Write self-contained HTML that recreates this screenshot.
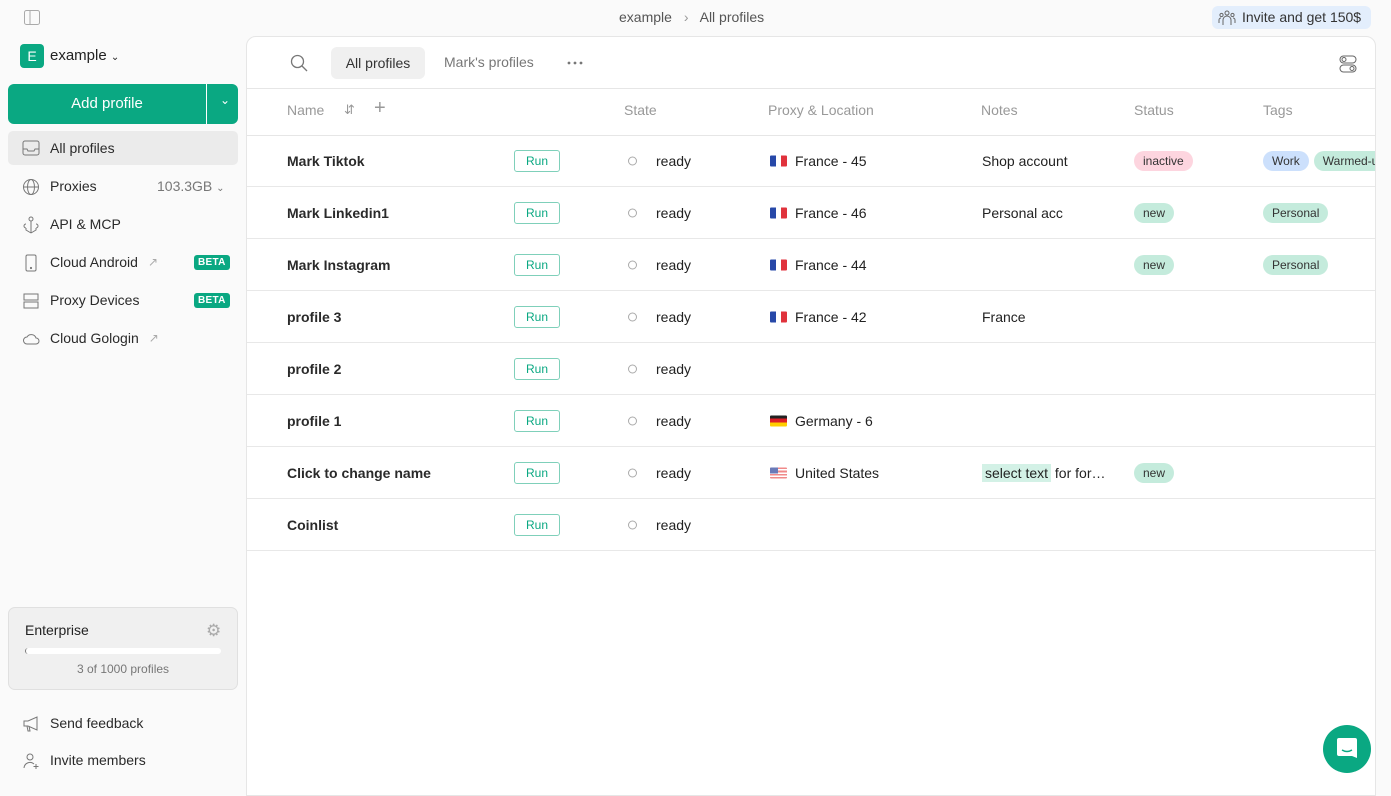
<!DOCTYPE html>
<html><head><meta charset="utf-8"><style>
*{box-sizing:border-box;margin:0;padding:0}
body{width:1391px;height:793px;overflow:hidden;background:#fafafa;font-family:"Liberation Sans",sans-serif;font-size:14px;color:#222;position:relative}
.abs{position:absolute}
.nav{position:absolute;left:8px;width:230px;height:34px;display:flex;align-items:center;padding-left:42px;font-size:14px;color:#2a2a2a}
.nav svg{position:absolute;left:14px;top:9px}
.beta{position:absolute;left:186px;top:10px;background:#0aa882;color:#fff;font-size:10px;font-weight:bold;padding:2px 4px;border-radius:3px;letter-spacing:.3px}
.arr{color:#aaa;font-size:12px;margin-left:10px}
.main{position:absolute;left:246px;top:36px;width:1130px;height:760px;background:#fff;border:1px solid #e6e6e6;border-radius:10px 10px 0 0;overflow:hidden}
.row{position:absolute;left:0;width:1130px;height:52px;border-bottom:1px solid #e8e8e8}
.row>*{position:absolute;top:50%;transform:translateY(-50%);white-space:nowrap}
.nm{left:40px;font-weight:bold;color:#2a2a2a}
.run{left:267px;width:46px;height:22px;border:1px solid #7fd0ba;border-radius:3px;color:#0aa882;font-size:12px;text-align:center;line-height:20px}
.dot{left:381px;width:9px;height:9px;border:1px solid #aaa;border-radius:50%}
.rd{left:409px}
.fl{left:523px;width:17px;height:11px;border-radius:1px;overflow:hidden;display:flex}
.px{left:548px}
.nt{left:735px}
.pill{font-size:12px;padding:3px 9px;border-radius:11px;color:#333}
.st{left:887px}
.tg{left:1016px;display:flex;gap:5px}
.hd{position:absolute;top:65px;color:#999;font-size:14px}
</style></head><body>
<svg class="abs" style="left:24px;top:10px" width="16" height="15" viewBox="0 0 16 15" fill="none" stroke="#aaa"><rect x=".5" y=".5" width="15" height="14" rx="2"/><line x1="6" y1="1" x2="6" y2="14"/></svg>
<div class="abs" style="left:619px;top:9px;color:#555">example <span style="color:#999;margin:0 8px">›</span> All profiles</div>
<div class="abs" style="left:1212px;top:6px;height:23px;width:159px;background:#e3eefc;border-radius:6px;padding:3px 0 0 30px;font-size:14px;color:#333">Invite and get 150$</div>
<svg class="abs" style="left:1218px;top:10px" width="18" height="16" viewBox="0 0 18 16" fill="none" stroke="#666"><circle cx="9" cy="3" r="2"/><circle cx="3.5" cy="5" r="1.6"/><circle cx="14.5" cy="5" r="1.6"/><path d="M5 15v-5a4 4 0 0 1 8 0v5M1 13v-3a2 2 0 0 1 2-2M17 13v-3a2 2 0 0 0-2-2"/></svg>

<div class="abs" style="left:20px;top:44px;width:24px;height:24px;background:#0aa882;border-radius:4px;color:#fff;text-align:center;line-height:24px;font-size:14px">E</div>
<div class="abs" style="left:50px;top:47px;font-size:15px">example <span style="font-size:10px">⌄</span></div>
<div class="abs" style="left:8px;top:84px;width:230px;height:40px;background:#0aa882;border-radius:6px;color:#fff;font-size:15px"><div style="position:absolute;left:0;width:198px;text-align:center;top:11px">Add profile</div><div style="position:absolute;left:198px;top:0;width:1px;height:40px;background:#fff"></div><div style="position:absolute;left:212px;top:9px;font-size:12px">⌄</div></div>

<div class="nav" style="top:131px;background:#ebebeb;border-radius:5px"><svg width="18" height="16" viewBox="0 0 18 16" fill="none" stroke="#777"><rect x="1" y="1" width="16" height="14" rx="2"/><path d="M1 9h4l1 2h6l1-2h4"/></svg>All profiles</div>
<div class="nav" style="top:169px"><svg width="18" height="18" viewBox="0 0 18 18" fill="none" stroke="#777"><circle cx="9" cy="9" r="7.5"/><ellipse cx="9" cy="9" rx="3.5" ry="7.5"/><path d="M1.5 9h15"/></svg>Proxies<span style="position:absolute;left:149px;color:#777">103.3GB <span style="font-size:10px">⌄</span></span></div>
<div class="nav" style="top:207px"><svg width="18" height="18" viewBox="0 0 18 18" fill="none" stroke="#777"><circle cx="9" cy="3" r="2"/><path d="M9 5v12M4 8a2 2 0 1 0 0 4M14 8a2 2 0 1 1 0 4M4 12v2l5 3M14 12v2l-5 3"/></svg>API &amp; MCP</div>
<div class="nav" style="top:245px"><svg width="18" height="18" viewBox="0 0 18 18" fill="none" stroke="#777"><rect x="4" y="1" width="10" height="16" rx="1.5"/><circle cx="9" cy="14" r=".6" fill="#777"/></svg>Cloud Android<span class="arr">↗</span><span class="beta">BETA</span></div>
<div class="nav" style="top:283px"><svg width="18" height="18" viewBox="0 0 18 18" fill="none" stroke="#777"><rect x="2" y="2" width="14" height="6"/><rect x="2" y="10" width="14" height="6"/></svg>Proxy Devices<span class="beta">BETA</span></div>
<div class="nav" style="top:321px"><svg width="18" height="18" viewBox="0 0 18 18" fill="none" stroke="#777"><path d="M5 14a3.5 3.5 0 0 1 0-7 5 5 0 0 1 9 1 3 3 0 0 1 0 6z"/></svg>Cloud Gologin<span class="arr">↗</span></div>

<div class="abs" style="left:8px;top:607px;width:230px;height:83px;background:#f0f0f0;border:1px solid #e0e0e0;border-radius:7px">
<div class="abs" style="left:16px;top:14px;font-size:14px">Enterprise</div>
<div class="abs" style="left:197px;top:13px;color:#aaa;font-size:17px">⚙</div>
<div class="abs" style="left:16px;top:40px;width:196px;height:6px;background:#fff;border-radius:3px;border-left:1px solid #777"></div>
<div class="abs" style="left:0;width:228px;top:54px;text-align:center;font-size:12px;color:#777">3 of 1000 profiles</div></div>
<div class="nav" style="top:706px"><svg width="18" height="18" viewBox="0 0 18 18" fill="none" stroke="#777"><path d="M2 6h4l9-4v13l-9-4H2zM5 11l1 5h2l-1-5"/></svg>Send feedback</div>
<div class="nav" style="top:743px"><svg width="18" height="18" viewBox="0 0 18 18" fill="none" stroke="#777"><circle cx="8" cy="5" r="3"/><path d="M2 16a6 6 0 0 1 10-4M14 12v5M11.5 14.5h5"/></svg>Invite members</div>

<div class="main">
<svg class="abs" style="left:43px;top:17px" width="18" height="18" viewBox="0 0 18 18" fill="none" stroke="#777" stroke-width="1.3"><circle cx="7.5" cy="7.5" r="6"/><path d="M12 12l5 5"/></svg>
<div class="abs" style="left:84px;top:10px;width:94px;height:32px;background:#f0f0f0;border-radius:6px;text-align:center;line-height:32px;color:#333">All profiles</div>
<div class="abs" style="left:197px;top:17px;color:#777">Mark's profiles</div>
<svg class="abs" style="left:320px;top:24px" width="16" height="4" viewBox="0 0 16 4" fill="#777"><circle cx="2" cy="2" r="1.4"/><circle cx="8" cy="2" r="1.4"/><circle cx="14" cy="2" r="1.4"/></svg>
<svg class="abs" style="left:1092px;top:18px" width="18" height="18" viewBox="0 0 18 18" fill="none" stroke="#666"><rect x="1" y="1" width="16" height="7" rx="3.5"/><rect x="1" y="10" width="16" height="7" rx="3.5"/><circle cx="5" cy="4.5" r="2"/><circle cx="13" cy="13.5" r="2"/></svg>
<div class="abs" style="left:0;top:51px;width:1130px;border-top:1px solid #e6e6e6"></div>
<div class="hd" style="left:40px">Name</div><div class="hd" style="left:97px;font-size:13px">⇵</div><div class="hd" style="left:127px;top:60px;font-size:20px;font-weight:300">+</div>
<div class="hd" style="left:377px">State</div><div class="hd" style="left:521px">Proxy &amp; Location</div><div class="hd" style="left:734px">Notes</div><div class="hd" style="left:887px">Status</div><div class="hd" style="left:1016px">Tags</div>
<div class="abs" style="left:0;top:98px;width:1130px;border-top:1px solid #e6e6e6"></div>

<div class="row" style="top:98px"><span class="nm">Mark Tiktok</span><span class="run">Run</span><span class="dot"></span><span class="rd">ready</span><span class="fl"><i style="flex:1;background:#2748a8"></i><i style="flex:1;background:#fff"></i><i style="flex:1;background:#e0323c"></i></span><span class="px">France - 45</span><span class="nt">Shop account</span><span class="st pill" style="background:#fdd5df">inactive</span><span class="tg"><span class="pill" style="background:#cce0fc">Work</span><span class="pill" style="background:#c4ebdc">Warmed-up</span></span></div>
<div class="row" style="top:150px"><span class="nm">Mark Linkedin1</span><span class="run">Run</span><span class="dot"></span><span class="rd">ready</span><span class="fl"><i style="flex:1;background:#2748a8"></i><i style="flex:1;background:#fff"></i><i style="flex:1;background:#e0323c"></i></span><span class="px">France - 46</span><span class="nt">Personal acc</span><span class="st pill" style="background:#c4ebdc">new</span><span class="tg"><span class="pill" style="background:#c4ebdc">Personal</span></span></div>
<div class="row" style="top:202px"><span class="nm">Mark Instagram</span><span class="run">Run</span><span class="dot"></span><span class="rd">ready</span><span class="fl"><i style="flex:1;background:#2748a8"></i><i style="flex:1;background:#fff"></i><i style="flex:1;background:#e0323c"></i></span><span class="px">France - 44</span><span class="st pill" style="background:#c4ebdc">new</span><span class="tg"><span class="pill" style="background:#c4ebdc">Personal</span></span></div>
<div class="row" style="top:254px"><span class="nm">profile 3</span><span class="run">Run</span><span class="dot"></span><span class="rd">ready</span><span class="fl"><i style="flex:1;background:#2748a8"></i><i style="flex:1;background:#fff"></i><i style="flex:1;background:#e0323c"></i></span><span class="px">France - 42</span><span class="nt">France</span></div>
<div class="row" style="top:306px"><span class="nm">profile 2</span><span class="run">Run</span><span class="dot"></span><span class="rd">ready</span></div>
<div class="row" style="top:358px"><span class="nm">profile 1</span><span class="run">Run</span><span class="dot"></span><span class="rd">ready</span><span class="fl" style="flex-direction:column"><i style="flex:1;background:#222"></i><i style="flex:1;background:#dd1f26"></i><i style="flex:1;background:#ffce00"></i></span><span class="px">Germany - 6</span></div>
<div class="row" style="top:410px"><span class="nm">Click to change name</span><span class="run">Run</span><span class="dot"></span><span class="rd">ready</span><span class="fl" style="background:repeating-linear-gradient(#f08a8a 0 1.6px,#fff 1.6px 3.2px)"><i style="width:8px;height:6px;background:#6a7ab8"></i></span><span class="px">United States</span><span class="nt"><span style="background:#d3f1e6;padding:1px 3px">select text</span> for for…</span><span class="st pill" style="background:#c4ebdc">new</span></div>
<div class="row" style="top:462px"><span class="nm">Coinlist</span><span class="run">Run</span><span class="dot"></span><span class="rd">ready</span></div>
</div>
<div class="abs" style="left:1323px;top:725px;width:48px;height:48px;border-radius:50%;background:#0aa882"></div>
<svg class="abs" style="left:1336px;top:737px" width="22" height="24" viewBox="0 0 22 24"><path d="M3 1h16a2 2 0 0 1 2 2v18l-5-2H3a2 2 0 0 1-2-2V3a2 2 0 0 1 2-2z" fill="#fff"/><path d="M6 13q5 3 10 0" stroke="#0aa882" stroke-width="1.5" fill="none"/></svg>
</body></html>
